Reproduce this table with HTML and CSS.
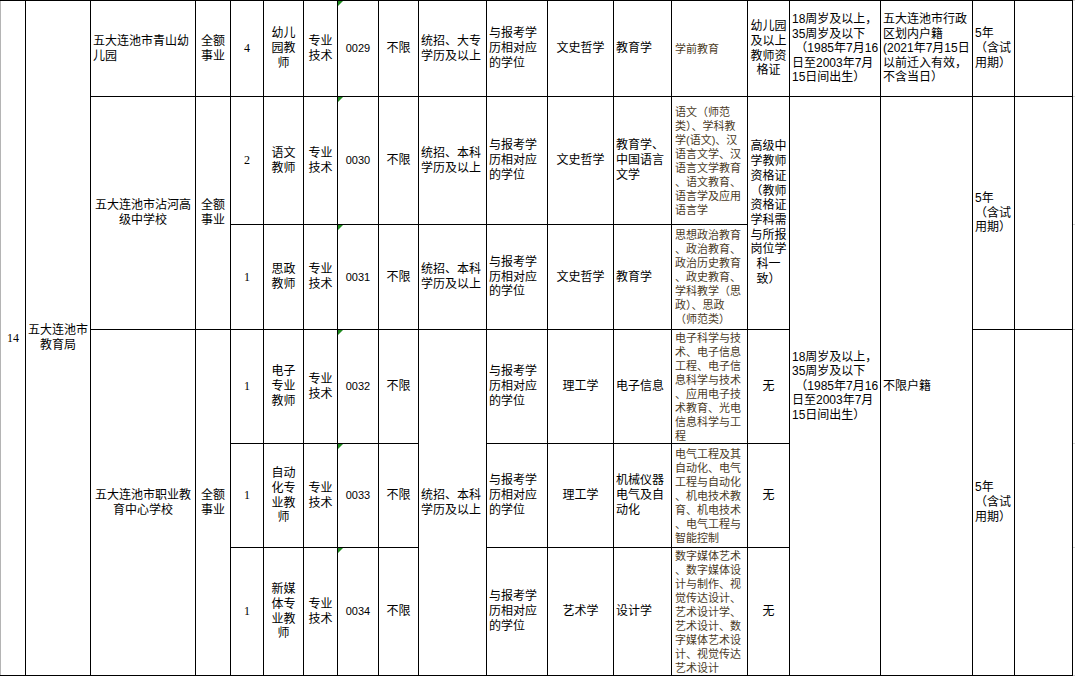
FILE: index.html
```html
<!DOCTYPE html>
<html lang="zh-CN">
<head>
<meta charset="utf-8">
<title>岗位表</title>
<link rel="stylesheet" href="styles.css">
</head>
<body>
<table class="sheet">
  <colgroup>
    <col class="w25"><col class="w65"><col class="w105"><col class="w35"><col class="w33">
    <col class="w40"><col class="w34"><col class="w41"><col class="w40"><col class="w68">
    <col class="w61"><col class="w66"><col class="w58"><col class="w76"><col class="w42">
    <col class="w91"><col class="w92"><col class="w42"><col class="w58"><col class="w3">
  </colgroup>
  <tr class="r1">
    <td rowspan="6" class="num first">14</td>
    <td rowspan="6">五大连池市<br>教育局</td>
    <td class="l">五大连池市青山幼<br>儿园</td>
    <td>全额<br>事业</td>
    <td class="num">4</td>
    <td>幼儿<br>园教<br>师</td>
    <td>专业<br>技术</td>
    <td class="code">0029</td>
    <td>不限</td>
    <td class="l">统招、大专<br>学历及以上</td>
    <td class="l">与报考学<br>历相对应<br>的学位</td>
    <td>文史哲学</td>
    <td class="l">教育学</td>
    <td class="maj">学前教育</td>
    <td>幼儿园<br>及以上<br>教师资<br>格证</td>
    <td class="l age">18周岁及以上，<br>35周岁及以下<br>&nbsp;（1985年7月16<br>日至2003年7月<br>15日间出生）</td>
    <td class="l age">五大连池市行政<br>区划内户籍<br>(2021年7月15日<br>以前迁入有效，<br>不含当日）</td>
    <td class="l">5年<br>（含试<br>用期）</td>
    <td></td>
    <td class="edge"></td>
  </tr>
  <tr class="r2">
    <td rowspan="2">五大连池市沾河高<br>级中学校</td>
    <td rowspan="2">全额<br>事业</td>
    <td class="num">2</td>
    <td>语文<br>教师</td>
    <td>专业<br>技术</td>
    <td class="code">0030</td>
    <td>不限</td>
    <td class="l">统招、本科<br>学历及以上</td>
    <td class="l">与报考学<br>历相对应<br>的学位</td>
    <td>文史哲学</td>
    <td class="l">教育学、<br>中国语言<br>文学</td>
    <td class="maj">语文（师范<br>类）、学科教<br>学(语文)、汉<br>语言文学、汉<br>语言文学教育<br>、语文教育、<br>语言学及应用<br>语言学</td>
    <td rowspan="2">高级中<br>学教师<br>资格证<br>（教师<br>资格证<br>学科需<br>与所报<br>岗位学<br>科一<br>致）</td>
    <td rowspan="5" class="l age">18周岁及以上，<br>35周岁及以下<br>&nbsp;（1985年7月16<br>日至2003年7月<br>15日间出生）</td>
    <td rowspan="5" class="l">不限户籍</td>
    <td rowspan="2" class="l">5年<br>（含试<br>用期）</td>
    <td rowspan="2"></td>
    <td class="edge"></td>
  </tr>
  <tr class="r3">
    <td class="num">1</td>
    <td>思政<br>教师</td>
    <td>专业<br>技术</td>
    <td class="code">0031</td>
    <td>不限</td>
    <td class="l">统招、本科<br>学历及以上</td>
    <td class="l">与报考学<br>历相对应<br>的学位</td>
    <td>文史哲学</td>
    <td class="l">教育学</td>
    <td class="maj">思想政治教育<br>、政治教育、<br>政治历史教育<br>、政史教育、<br>学科教学（思<br>政）、思政<br>（师范类）</td>
    <td class="edge"></td>
  </tr>
  <tr class="r4">
    <td rowspan="3">五大连池市职业教<br>育中心学校</td>
    <td rowspan="3">全额<br>事业</td>
    <td class="num">1</td>
    <td>电子<br>专业<br>教师</td>
    <td>专业<br>技术</td>
    <td class="code">0032</td>
    <td>不限</td>
    <td rowspan="3" class="l">统招、本科<br>学历及以上</td>
    <td class="l">与报考学<br>历相对应<br>的学位</td>
    <td>理工学</td>
    <td class="l">电子信息</td>
    <td class="maj">电子科学与技<br>术、电子信息<br>工程、电子信<br>息科学与技术<br>、应用电子技<br>术教育、光电<br>信息科学与工<br>程</td>
    <td>无</td>
    <td rowspan="3" class="l">5年<br>（含试<br>用期）</td>
    <td rowspan="3"></td>
    <td class="edge"></td>
  </tr>
  <tr class="r5">
    <td class="num">1</td>
    <td>自动<br>化专<br>业教<br>师</td>
    <td>专业<br>技术</td>
    <td class="code">0033</td>
    <td>不限</td>
    <td class="l">与报考学<br>历相对应<br>的学位</td>
    <td>理工学</td>
    <td class="l">机械仪器<br>电气及自<br>动化</td>
    <td class="maj">电气工程及其<br>自动化、电气<br>工程与自动化<br>、机电技术教<br>育、机电技术<br>、电气工程与<br>智能控制</td>
    <td>无</td>
    <td class="edge"></td>
  </tr>
  <tr class="r6">
    <td class="num">1</td>
    <td>新媒<br>体专<br>业教<br>师</td>
    <td>专业<br>技术</td>
    <td class="code">0034</td>
    <td>不限</td>
    <td class="l">与报考学<br>历相对应<br>的学位</td>
    <td>艺术学</td>
    <td class="l">设计学</td>
    <td class="maj">数字媒体艺术<br>、数字媒体设<br>计与制作、视<br>觉传达设计、<br>艺术设计学、<br>艺术设计、数<br>字媒体艺术设<br>计、视觉传达<br>艺术设计</td>
    <td>无</td>
    <td class="edge"></td>
  </tr>
</table>
</body>
</html>
```

FILE: styles.css
```css
html, body {
  margin: 0;
  padding: 0;
  background: #ffffff;
}

.sheet {
  border-collapse: collapse;
  table-layout: fixed;
  width: 1075px;
  font-family: "Liberation Sans", "Noto Sans CJK SC", sans-serif;
  font-size: 12px;
  color: #000;
}

.w25 { width: 25px; }
.w65 { width: 65px; }
.w105 { width: 105px; }
.w35 { width: 35px; }
.w33 { width: 33px; }
.w40 { width: 40px; }
.w34 { width: 34px; }
.w41 { width: 41px; }
.w68 { width: 68px; }
.w61 { width: 61px; }
.w66 { width: 66px; }
.w58 { width: 58px; }
.w76 { width: 76px; }
.w42 { width: 42px; }
.w91 { width: 91px; }
.w92 { width: 92px; }
.w3 { width: 3px; }

.r1 { height: 96px; }
.r2 { height: 128px; }
.r3 { height: 105px; }
.r4 { height: 114px; }
.r5 { height: 104px; }
.r6 { height: 128px; }

.sheet td {
  border: 1px solid #000;
  padding: 0 1px;
  vertical-align: middle;
  text-align: center;
  line-height: 14.7px;
  white-space: nowrap;
  overflow: hidden;
}

.sheet td.first {
  border-left-color: #b4b4b4;
}

.sheet td.l {
  text-align: left;
  padding-left: 2px;
}

.sheet td.age {
  line-height: 14.5px;
}

.sheet td.num {
  font-family: "Liberation Serif", "Noto Sans CJK SC", serif;
  font-size: 12px;
}

.sheet td.code {
  position: relative;
  font-family: "Liberation Sans", sans-serif;
  font-size: 11px;
  overflow: visible;
}

.sheet td.code::before {
  content: "";
  position: absolute;
  left: 0;
  top: 0;
  width: 0;
  height: 0;
  border-top: 5px solid #1f8a1f;
  border-right: 5px solid transparent;
}

.sheet td.maj {
  text-align: left;
  padding-left: 3px;
  font-size: 11px;
  line-height: 14px;
  color: #4a3a1e;
}

.sheet td.edge {
  border-left: none;
  border-right: none;
  border-top: 1px solid #d4d4d4;
  border-bottom: 1px solid #d4d4d4;
  padding: 0;
}
```
